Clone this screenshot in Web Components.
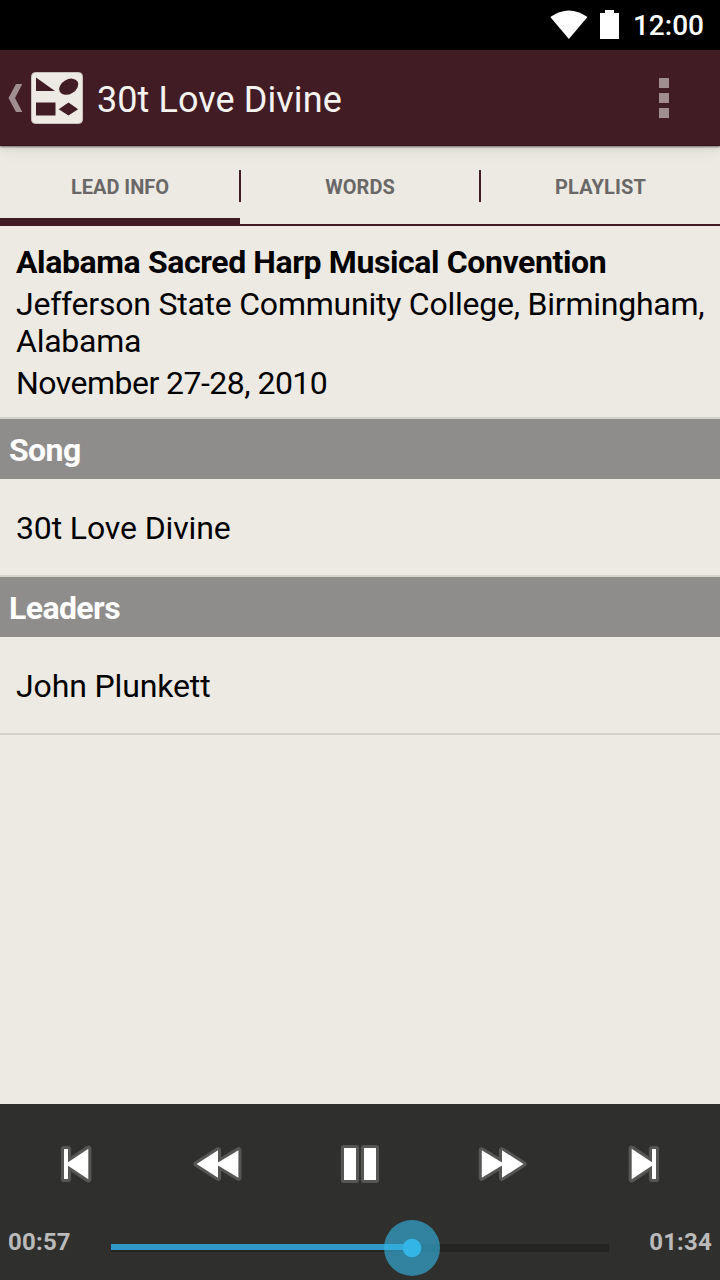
<!DOCTYPE html>
<html lang="en">
<head>
<meta charset="utf-8">
<title>30t Love Divine</title>
<style>
html,body{margin:0;height:100%;background:#edeae3}
body{font-family:Roboto,"Noto Sans",sans-serif;font-size:32px;color:#000;overflow:hidden}
</style>
</head>
<body>
<lead-screen></lead-screen>
<script>
function define(name, html){
  const t = document.createElement('template');
  t.innerHTML = html;
  customElements.define(name, class extends HTMLElement{
    constructor(){
      super();
      this.attachShadow({mode:'open'}).append(t.content.cloneNode(true));
    }
  });
}

define('status-bar', `
<style>
:host{display:flex;height:50px;background:#000;color:#fff;justify-content:flex-end;align-items:flex-start;box-sizing:border-box;padding-right:16px}
svg{display:block;flex:none}
.wifi{margin-right:12px}
.battery{margin-right:14px}
span{font-size:28px;font-weight:500;line-height:34px;padding-top:9px}
</style>
<svg class="wifi" width="38" height="50" viewBox="550 0 38 50"><path d="M550.300 17Q568.900 3.800 587.500 17L568.900 39Z" fill="#fff"/></svg>
<svg class="battery" width="19" height="50" viewBox="600 0 19 50"><path d="M605 10h9v3h5v26h-19V13h5z" fill="#fff"/></svg>
<span>12:00</span>`);

define('action-bar', `
<style>
:host{display:flex;height:96px;background:#411c25;color:#f5f3f0;align-items:center;box-shadow:0 1px 2px rgba(0,0,0,.5),0 3px 14px rgba(0,0,0,.1);position:relative;box-sizing:border-box;padding:0 32px 0 8px;border-bottom:1px solid #35141c}
svg{display:block;flex:none}
h1{flex:1;margin:0 0 0 14px;font-size:36px;font-weight:400;line-height:44px;white-space:nowrap;padding-top:5px;letter-spacing:.08px}
</style>
<svg width="75" height="96" viewBox="8 50 75 96">
<path d="M16 84h6.300L15 98l7.300 14H16L8.500 98z" fill="#a08d92"/>
<rect x="31.500" y="72.500" width="51" height="51" rx="4" fill="#edeae3" stroke="#c9c1bd"/>
<g fill="#411c25"><path d="M36 77.500V91h19z"/><ellipse cx="68.700" cy="86.700" rx="10.300" ry="7.200" transform="rotate(-30 68.700 86.700)"/><path d="M36 102.500h19.500v13H36zM58.700 109.300l9.800-6.800 9.600 6.800-9.600 6.200z"/></g>
</svg>
<h1><slot></slot></h1>
<svg width="48" height="96" viewBox="640 50 48 96"><path d="M659 78h10v10h-10zM659 93h10v10h-10zM659 108h10v10h-10z" fill="#a08d92"/></svg>`);

define('tab-item', `
<style>
:host{display:flex;position:relative;box-sizing:border-box;height:80px;align-items:center;justify-content:center;padding-top:4px;border-bottom:2px solid #411c25;font-size:20px;font-weight:700;line-height:24px;color:#696867}
:host([selected]){border-bottom-width:8px;padding-top:10px}
:host([divided])::after{content:"";position:absolute;right:-1px;top:24px;width:2px;height:32px;background:#411c25;z-index:1}
:host(:last-child){letter-spacing:.15px;padding-left:1px}
</style><slot></slot>`);

define('tab-strip', `
<style>:host{display:grid;grid-template-columns:repeat(3,1fr);height:80px}</style><slot></slot>`);

define('event-summary', `
<style>
:host{display:block;box-sizing:border-box;height:193px;padding:18px 0 0 16px;border-bottom:2px solid #d4d3cb;line-height:37px;letter-spacing:-.23px}
::slotted(*){display:block;margin-bottom:5px;white-space:nowrap}
::slotted(b){letter-spacing:-.39px}
::slotted(:last-child){letter-spacing:-.53px}
</style><slot></slot>`);

define('section-header', `
<style>:host{display:flex;align-items:center;box-sizing:border-box;height:60px;padding:1px 0 0 9px;background:#8e8d8b;color:#fff;font-weight:700;letter-spacing:-.6px}</style><slot></slot>`);

define('list-row', `
<style>:host{display:flex;align-items:center;box-sizing:border-box;height:98px;padding:1px 0 0 16px;border-bottom:2px solid #d4d3cb;letter-spacing:-.13px}</style><slot></slot>`);

define('media-button', `
<style>
:host{display:flex;justify-content:center}
::slotted(svg){display:block;width:60px;height:60px;overflow:visible}
</style><slot></slot>`);

define('seek-bar', `
<style>
:host{display:flex;align-items:center;height:60px}
.track{position:relative;flex:1;height:8px;background:#232321}
.fill{width:301px;height:6px;background:#3199c6}
.knob{position:absolute;left:273px;top:-24px;width:56px;height:56px;border-radius:50%;background:radial-gradient(circle,#33b5e5 0 8.700px,transparent 9.700px),linear-gradient(#33b5e5a0,#33b5e5a0)}
</style><div class="track"><div class="fill"></div><div class="knob"></div></div>`);

define('media-player', `
<style>
:host{display:flex;flex-direction:column;height:176px;background:#2f2f2d}
.controls{display:grid;grid-template-columns:repeat(5,142px);justify-content:center;height:84px;padding-top:30px;box-sizing:border-box;margin-bottom:30px}
.controls svg{fill:#fff;stroke:#565654;stroke-width:6.200px;stroke-linejoin:round;paint-order:stroke}
.time{display:grid;grid-template-columns:103px 498px 103px;padding:0 8px;align-items:center}
.time span{font-size:24px;font-weight:700;line-height:28px;color:#bababa;margin-top:-12px;letter-spacing:.2px}
.time span:last-child{text-align:right}
</style>
<div class="controls">
<media-button><svg viewBox="46 1134 60 60"><path d="M64 1149h4v13.300l20.300-13.600v30.600L68 1165.700v13.300h-4z"/></svg></media-button>
<media-button><svg viewBox="188 1134 60 60"><path d="M196.600 1164l21.400-13.700v12.300l20.400-12.300v27.400l-20.400-12.300v12.300z"/></svg></media-button>
<media-button><svg viewBox="330 1134 60 60"><path d="M344 1148h12v32h-12zM364 1148h12v32h-12z"/></svg></media-button>
<media-button><svg viewBox="472 1134 60 60"><path d="M481.800 1150.300l20.200 12.300v-12.300l21.500 13.700-21.500 13.700v-12.300l-20.200 12.300z"/></svg></media-button>
<media-button><svg viewBox="614 1134 60 60"><path d="M631.700 1148.700l20.300 13.600v-13.300h4v30h-4v-13.300l-20.300 13.600z"/></svg></media-button>
</div>
<div class="time"><span>00:57</span><seek-bar></seek-bar><span>01:34</span></div>`);

define('lead-screen', `
<style>
:host{display:flex;flex-direction:column;width:720px;height:1280px;background:#edeae3}
main{flex:1}
status-bar,action-bar,tab-strip,media-player{flex:none}
</style>
<status-bar></status-bar>
<action-bar>30t Love Divine</action-bar>
<tab-strip><tab-item selected divided>LEAD INFO</tab-item><tab-item divided>WORDS</tab-item><tab-item>PLAYLIST</tab-item></tab-strip>
<main>
<event-summary><b>Alabama Sacred Harp Musical Convention</b><span>Jefferson State Community College, Birmingham,<br>Alabama</span><span>November 27-28, 2010</span></event-summary>
<section-header>Song</section-header>
<list-row>30t Love Divine</list-row>
<section-header>Leaders</section-header>
<list-row>John Plunkett</list-row>
</main>
<media-player></media-player>`);
</script>
</body>
</html>
